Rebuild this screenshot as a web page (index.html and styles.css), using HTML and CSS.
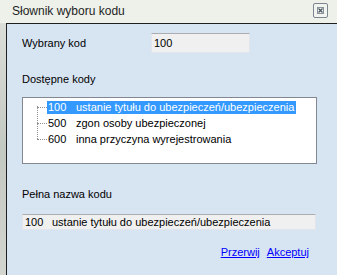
FILE: index.html
```html
<!DOCTYPE html>
<html lang="pl">
<head>
    <meta charset="UTF-8">
    <title>Słownik wyboru kodu</title>
    <link rel="stylesheet" href="styles.css">
</head>
<body>

    <div class="window">
        <!-- Title bar -->
        <div class="titlebar">
            <span class="title">Słownik wyboru kodu</span>
            <span class="close-btn">
                <svg width="7" height="7" viewBox="0 0 7 7">
                    <rect x="0.5" y="0.5" width="6" height="6" fill="none" stroke="#8a949e" stroke-width="1"/>
                    <path d="M1.5 1.5 L5.5 5.5 M5.5 1.5 L1.5 5.5" stroke="#4a545e" stroke-width="1.2" fill="none"/>
                </svg>
            </span>
        </div>

        <div class="frame">
            <div class="panel">

                <div class="field-row">
                    <span class="label code-label">Wybrany kod</span>
                    <div class="textbox code-box">100</div>
                </div>

                <div class="label section-label">Dostępne kody</div>

                <!-- Tree view -->
                <div class="tree">
                    <div class="tree-line"></div>
                    <div class="tree-item selected">
                        <span class="branch"></span>
                        <span class="item-text"><span class="num">100</span>ustanie tytułu do ubezpieczeń/ubezpieczenia</span>
                    </div>
                    <div class="tree-item">
                        <span class="branch"></span>
                        <span class="item-text"><span class="num">500</span>zgon osoby ubezpieczonej</span>
                    </div>
                    <div class="tree-item">
                        <span class="branch"></span>
                        <span class="item-text"><span class="num">600</span>inna przyczyna wyrejestrowania</span>
                    </div>
                </div>

                <div class="label full-label">Pełna nazwa kodu</div>
                <div class="textbox full-box"><span class="num">100</span>ustanie tytułu do ubezpieczeń/ubezpieczenia</div>

                <div class="links">
                    <a href="#">Przerwij</a>
                    <a href="#">Akceptuj</a>
                </div>

            </div>
        </div>
    </div>

</body>
</html>
```

FILE: styles.css
```css
* {
    margin: 0;
    padding: 0;
    box-sizing: border-box;
}

body {
    width: 337px;
    height: 275px;
    overflow: hidden;
    font-family: "Liberation Sans", Arial, sans-serif;
    font-size: 11px;
    color: #000;
    background: #c9cec6;
}

.window {
    display: flex;
    flex-direction: column;
    height: 275px;
}

/* Title bar */
.titlebar {
    height: 23px;
    display: flex;
    align-items: center;
    justify-content: space-between;
    padding: 0 9px 0 12px;
    background: #edf1ea;
}

.title {
    font-size: 12px;
    color: #1e1e1e;
    margin-top: -1px;
}

.close-btn {
    width: 15px;
    height: 15px;
    margin-top: -2px;
    border: 1px solid #7d8791;
    border-radius: 2px;
    background: #f2f4f0;
    display: flex;
    align-items: center;
    justify-content: center;
}

/* Frame + content */
.frame {
    flex: 1;
    display: flex;
    padding-left: 6px;
    background: linear-gradient(to bottom, #dcdfd7, #c3c8c0 50%, #d3d6ce);
}

.panel {
    flex: 1;
    background: #d7e4f2;
    border-left: 1px solid #1f1f1f;
    border-top: 1px solid #1f1f1f;
    padding: 9px 0 0 15px;
}

.label {
    line-height: 13px;
}

.field-row {
    display: flex;
    align-items: center;
    height: 20px;
}

.code-label {
    width: 129px;
}

.textbox {
    background: #f0f0f0;
    border: 1px solid #e2e6ec;
    border-top-color: #abadb3;
    line-height: 13px;
}

.code-box {
    width: 99px;
    height: 20px;
    padding: 3px 2px;
}

.section-label {
    margin-top: 20px;
}

/* Tree view */
.tree {
    position: relative;
    width: 295px;
    height: 67px;
    margin-top: 11px;
    background: #fff;
    border: 1px solid #828790;
    padding-top: 1px;
}

.tree-line {
    position: absolute;
    left: 14px;
    top: 8px;
    height: 33px;
    border-left: 1px dotted #8f8f8f;
}

.tree-item {
    display: flex;
    align-items: center;
    height: 16px;
    padding-left: 14px;
}

.branch {
    width: 10px;
    border-top: 1px dotted #8f8f8f;
}

.item-text {
    line-height: 13px;
    padding: 0 2px 0 1px;
}

.tree-item.selected .item-text {
    background: #3399ff;
    color: #fff;
}

.num {
    display: inline-block;
    width: 28px;
}

.full-label {
    margin-top: 24px;
}

.full-box {
    width: 294px;
    height: 16px;
    margin-top: 13px;
    padding: 1px 2px 0 2px;
    line-height: 13px;
}

.full-box .num {
    width: 27px;
}

/* Links */
.links {
    display: flex;
    justify-content: flex-end;
    gap: 7px;
    width: 287px;
    margin-top: 16px;
    line-height: 13px;
}

.links a {
    color: #0000ff;
    text-decoration: underline;
}
```
